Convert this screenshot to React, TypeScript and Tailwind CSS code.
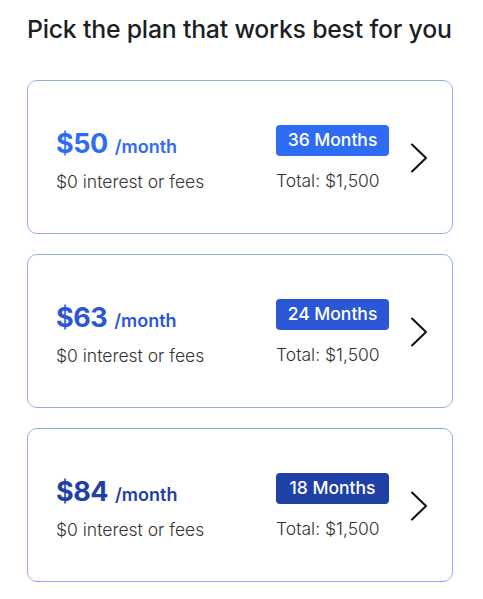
import React from "react";

interface Plan {
  price: string;
  months: number;
  accent: string;
  badge: string;
}

const PLANS: Plan[] = [
  { price: "$50", months: 36, accent: "text-[#2f6cf5]", badge: "bg-[#2f6cf5]" },
  { price: "$63", months: 24, accent: "text-[#2b57d6]", badge: "bg-[#2b57d6]" },
  { price: "$84", months: 18, accent: "text-[#1f40a4]", badge: "bg-[#1f40a4]" },
];

function Chevron() {
  return (
    <svg width="18" height="30" viewBox="0 0 18 30" fill="none" className="shrink-0">
      <path d="M2 1.5 L16 15 L2 28.5" stroke="#111" strokeWidth="2" strokeLinecap="round" strokeLinejoin="round" />
    </svg>
  );
}

function PlanCard({ plan }: { plan: Plan }) {
  return (
    <div className="h-[154px] rounded-[10px] border border-[#95acf0] bg-white flex items-start pl-[28px]">
      {/* left: monthly price */}
      <div className="w-[220px] shrink-0 pt-[47px]">
        <div className={`flex items-baseline gap-[7px] ${plan.accent}`}>
          <span className="text-[27px] leading-[32px] font-bold tracking-[-0.5px]">{plan.price}</span>
          <span className="text-[18px] font-semibold">/month</span>
        </div>
        <p className="mt-[10px] text-[17.5px] leading-[24px] text-[#333] font-light">$0 interest or fees</p>
      </div>

      {/* right: term + total */}
      <div className="w-[113px] shrink-0 pt-[44px]">
        <div className={`h-[31px] w-[113px] rounded-[4px] ${plan.badge} text-white text-[17.5px] font-medium flex items-center justify-center`}>
          {plan.months} Months
        </div>
        <p className="mt-[13px] text-[17.5px] leading-[24px] text-[#333] font-light whitespace-nowrap">Total: $1,500</p>
      </div>

      <div className="ml-[21px] self-center mt-[2px]">
        <Chevron />
      </div>
    </div>
  );
}

export default function App() {
  return (
    <div className="w-[483px] h-[599px] bg-white pl-[27px] pr-[30px] pt-[14px]" style={{ fontFamily: "Inter, 'Noto Sans', sans-serif" }}>
      <h1 className="text-[24.8px] leading-[30px] font-medium text-[#1d1f24] tracking-[-0.2px] whitespace-nowrap">
        Pick the plan that works best for you
      </h1>
      <div className="mt-[36px] flex flex-col gap-[20px]">
        {PLANS.map((p) => (
          <PlanCard key={p.months} plan={p} />
        ))}
      </div>
    </div>
  );
}
